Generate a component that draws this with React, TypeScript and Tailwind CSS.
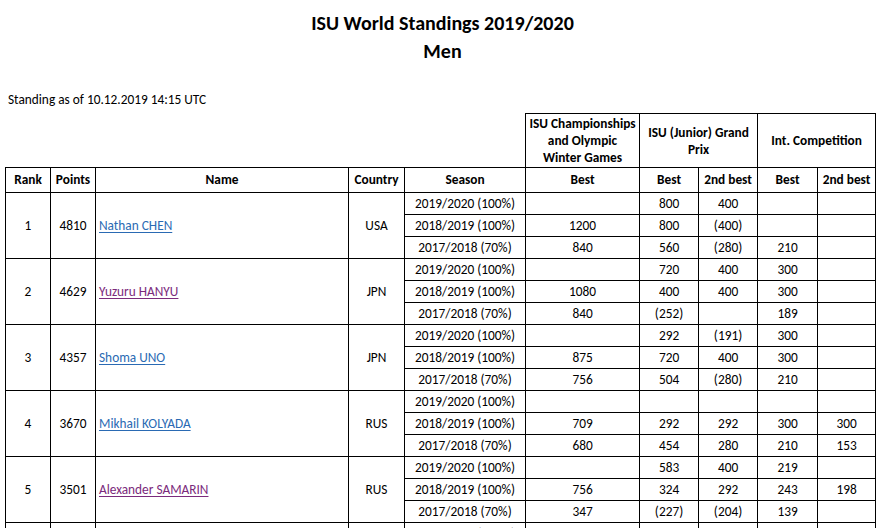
import React from "react";

type Sub = { season: string; c: [string, string, string, string, string] };
type Group = { rank: string; points: string; name: string; country: string; visited?: boolean; subs: Sub[] };

const groups: Group[] = [
  {
    rank: "1", points: "4810", name: "Nathan CHEN", country: "USA",
    subs: [
      { season: "2019/2020 (100%)", c: ["", "800", "400", "", ""] },
      { season: "2018/2019 (100%)", c: ["1200", "800", "(400)", "", ""] },
      { season: "2017/2018 (70%)", c: ["840", "560", "(280)", "210", ""] },
    ],
  },
  {
    rank: "2", points: "4629", name: "Yuzuru HANYU", country: "JPN", visited: true,
    subs: [
      { season: "2019/2020 (100%)", c: ["", "720", "400", "300", ""] },
      { season: "2018/2019 (100%)", c: ["1080", "400", "400", "300", ""] },
      { season: "2017/2018 (70%)", c: ["840", "(252)", "", "189", ""] },
    ],
  },
  {
    rank: "3", points: "4357", name: "Shoma UNO", country: "JPN",
    subs: [
      { season: "2019/2020 (100%)", c: ["", "292", "(191)", "300", ""] },
      { season: "2018/2019 (100%)", c: ["875", "720", "400", "300", ""] },
      { season: "2017/2018 (70%)", c: ["756", "504", "(280)", "210", ""] },
    ],
  },
  {
    rank: "4", points: "3670", name: "Mikhail KOLYADA", country: "RUS",
    subs: [
      { season: "2019/2020 (100%)", c: ["", "", "", "", ""] },
      { season: "2018/2019 (100%)", c: ["709", "292", "292", "300", "300"] },
      { season: "2017/2018 (70%)", c: ["680", "454", "280", "210", "153"] },
    ],
  },
  {
    rank: "5", points: "3501", name: "Alexander SAMARIN", country: "RUS", visited: true,
    subs: [
      { season: "2019/2020 (100%)", c: ["", "583", "400", "219", ""] },
      { season: "2018/2019 (100%)", c: ["756", "324", "292", "243", "198"] },
      { season: "2017/2018 (70%)", c: ["347", "(227)", "(204)", "139", ""] },
    ],
  },
];

const cell = "border border-black text-center align-middle p-0 leading-[16px]";
const rowH = "h-[22px]";

export default function App() {
  return (
    <div className="bg-white text-black font-[Calibri,Carlito,Lato,sans-serif] w-[885px] h-[528px] overflow-hidden">
      <div className="pt-[9px] text-center font-bold text-[20px] leading-[28px]">
        <div>ISU World Standings 2019/2020</div>
        <div>Men</div>
      </div>
      <div className="mt-[27px] pl-[8px] text-[13.33px] leading-[16px]">Standing as of 10.12.2019 14:15 UTC</div>
      <div className="mt-[5px] pl-[5px]">
        <table className="border-collapse table-fixed w-[871px] text-[13.33px]">
          <colgroup>
            <col className="w-[45px]" />
            <col className="w-[45px]" />
            <col className="w-[253px]" />
            <col className="w-[56px]" />
            <col className="w-[121px]" />
            <col className="w-[114px]" />
            <col className="w-[59px]" />
            <col className="w-[59px]" />
            <col className="w-[60px]" />
            <col className="w-[58px]" />
          </colgroup>
          <thead>
            <tr className="h-[54px]">
              <th colSpan={5} className="border-0 p-0"></th>
              <th className={`${cell} font-bold leading-[17px]`}>
                ISU Championships<br />and Olympic<br />Winter Games
              </th>
              <th colSpan={2} className={`${cell} font-bold leading-[17px]`}>
                ISU (Junior) Grand<br />Prix
              </th>
              <th colSpan={2} className={`${cell} font-bold leading-[17px]`}>Int. Competition</th>
            </tr>
            <tr className="h-[25px]">
              <th className={`${cell} font-bold`}>Rank</th>
              <th className={`${cell} font-bold`}>Points</th>
              <th className={`${cell} font-bold`}>Name</th>
              <th className={`${cell} font-bold`}>Country</th>
              <th className={`${cell} font-bold`}>Season</th>
              <th className={`${cell} font-bold`}>Best</th>
              <th className={`${cell} font-bold`}>Best</th>
              <th className={`${cell} font-bold`}>2nd best</th>
              <th className={`${cell} font-bold`}>Best</th>
              <th className={`${cell} font-bold`}>2nd best</th>
            </tr>
          </thead>
          <tbody>
            {groups.map((g) =>
              g.subs.map((s, i) => (
                <tr key={g.rank + i} className={rowH}>
                  {i === 0 && (
                    <>
                      <td rowSpan={3} className={cell}>{g.rank}</td>
                      <td rowSpan={3} className={cell}>{g.points}</td>
                      <td rowSpan={3} className={`${cell} text-left pl-[3px]`}>
                        <a
                          href="#"
                          className={`underline underline-offset-[2px] ${g.visited ? "text-[#7b2a7c] decoration-[#7b2a7c]" : "text-[#2a6ab3] decoration-[#2a6ab3]"}`}
                        >
                          {g.name}
                        </a>
                      </td>
                      <td rowSpan={3} className={cell}>{g.country}</td>
                    </>
                  )}
                  <td className={cell}>{s.season}</td>
                  {s.c.map((v, j) => (
                    <td key={j} className={cell}>{v}</td>
                  ))}
                </tr>
              ))
            )}
            <tr className={rowH}>
              <td rowSpan={3} className={cell}></td>
              <td rowSpan={3} className={cell}></td>
              <td rowSpan={3} className={cell}></td>
              <td rowSpan={3} className={cell}></td>
              <td className={cell}>2019/2020 (100%)</td>
              <td className={cell}></td>
              <td className={cell}></td>
              <td className={cell}></td>
              <td className={cell}></td>
              <td className={cell}></td>
            </tr>
          </tbody>
        </table>
      </div>
    </div>
  );
}
